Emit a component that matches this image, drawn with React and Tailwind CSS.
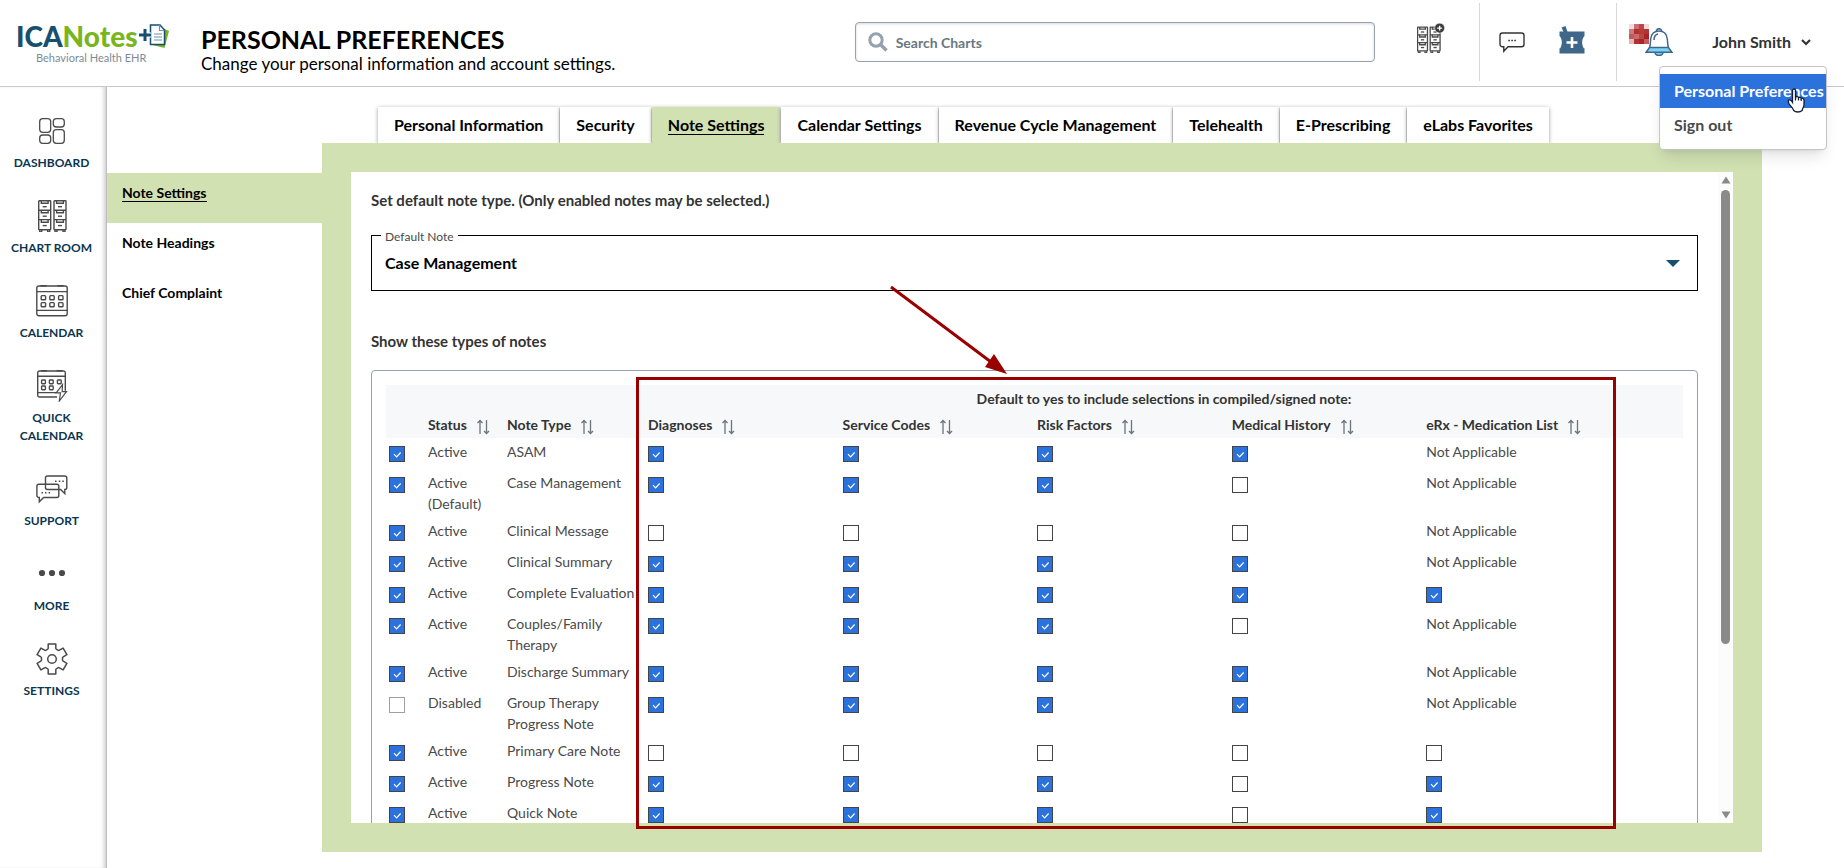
import { useState } from "react";

const NAV_ITEMS = [
  { label: "DASHBOARD", Icon: DashboardIcon },
  { label: "CHART ROOM", Icon: CabinetIcon },
  { label: "CALENDAR", Icon: CalendarIcon },
  { label: "QUICK CALENDAR", Icon: QuickCalendarIcon },
  { label: "SUPPORT", Icon: SupportIcon },
  { label: "MORE", Icon: MoreIcon },
  { label: "SETTINGS", Icon: GearIcon },
];

const TABS = [
  "Personal Information",
  "Security",
  "Note Settings",
  "Calendar Settings",
  "Revenue Cycle Management",
  "Telehealth",
  "E-Prescribing",
  "eLabs Favorites",
];

const SUB_MENU = ["Note Settings", "Note Headings", "Chief Complaint"];

const COLUMNS = [
  "Diagnoses",
  "Service Codes",
  "Risk Factors",
  "Medical History",
  "eRx - Medication List",
];

// flags follow COLUMNS, null means the column does not apply
const NOTES = [
  { status: "Active", type: "ASAM", flags: [true, true, true, true, null] },
  { status: "Active (Default)", type: "Case Management", flags: [true, true, true, false, null] },
  { status: "Active", type: "Clinical Message", flags: [false, false, false, false, null] },
  { status: "Active", type: "Clinical Summary", flags: [true, true, true, true, null] },
  { status: "Active", type: "Complete Evaluation", flags: [true, true, true, true, true] },
  { status: "Active", type: "Couples/Family Therapy", flags: [true, true, true, false, null] },
  { status: "Active", type: "Discharge Summary", flags: [true, true, true, true, null] },
  { status: "Disabled", type: "Group Therapy Progress Note", flags: [true, true, true, true, null] },
  { status: "Active", type: "Primary Care Note", flags: [false, false, false, false, false] },
  { status: "Active", type: "Progress Note", flags: [true, true, true, false, true] },
  { status: "Active", type: "Quick Note", flags: [true, true, true, false, true] },
];

function DashboardIcon() {
  return (
    <svg width="32" height="32" viewBox="0 0 32 32" fill="none" stroke="#4a4a4a" strokeWidth="1.3">
      <rect x="3.7" y="3.7" width="11" height="13.6" rx="3" />
      <rect x="17.3" y="3.7" width="11" height="8.3" rx="3" />
      <rect x="3.7" y="20" width="11" height="8.3" rx="3" />
      <rect x="17.3" y="14.7" width="11" height="13.6" rx="3" />
    </svg>
  );
}

function CabinetShape() {
  return (
    <>
      {[2.7, 18].map((x) => (
        <g key={x}>
          <rect x={x} y="0.7" width="12" height="29" rx="0.6" />
          <path d={`M${x} 10.2h12M${x} 19.6h12`} />
          {[0.7, 10.2, 19.6].map((y) => (
            <g key={y}>
              <path d={`M${x + 2.6} ${y}v2.6h6.8v-2.6`} />
              <path d={`M${x + 4} ${y + 6}h4`} />
            </g>
          ))}
          <path d={`M${x + 1} 30v2h2v-2M${x + 9} 30v2h2v-2`} />
        </g>
      ))}
    </>
  );
}

function CabinetIcon() {
  return (
    <svg width="32" height="32" viewBox="0 0 32 32" fill="none" stroke="#4a4a4a" strokeWidth="1.4">
      <CabinetShape />
    </svg>
  );
}

function CalendarIcon() {
  return (
    <svg width="32" height="32" viewBox="0 0 32 32" fill="none" stroke="#4a4a4a" strokeWidth="1.4">
      <rect x="0.8" y="1" width="30.4" height="29.8" rx="2" />
      <path d="M1 6.6h30M1 25.4h30" />
      <path d="M4.5 0.8h6M21.5 0.8h6" strokeWidth="1.6" />
      {[10.6, 17.6].map((y) =>
        [5.2, 13.8, 22.6].map((x) => (
          <rect key={`${x}-${y}`} x={x} y={y} width="4.4" height="4.2" rx="0.8" />
        ))
      )}
    </svg>
  );
}

function QuickCalendarIcon() {
  return (
    <svg width="32" height="32" viewBox="0 0 32 32" fill="none" stroke="#4a4a4a" strokeWidth="1.4">
      <path d="M21 27H3.5a1.8 1.8 0 0 1-1.8-1.8V2.8A1.8 1.8 0 0 1 3.5 1h24a1.8 1.8 0 0 1 1.8 1.8v18" />
      <path d="M2 6.2h27M2 22.6h18" />
      <path d="M5 0.8h6M20.5 0.8h6" strokeWidth="1.6" />
      <rect x="5.6" y="10" width="3.8" height="3.8" rx="0.7" />
      <rect x="13.4" y="10" width="3.8" height="3.8" rx="0.7" />
      <rect x="21.4" y="10" width="3.8" height="3.8" rx="0.7" />
      <rect x="5.6" y="16" width="3.8" height="3.8" rx="0.7" />
      <rect x="13.4" y="16" width="3.8" height="3.8" rx="0.7" />
      <path d="M26.5 14.6l-6.3 8.2h4.3l-1.2 8.2 7.2-9.4h-4.3z" fill="white" strokeWidth="1.2" />
    </svg>
  );
}

function SupportIcon() {
  return (
    <svg width="32" height="32" viewBox="0 0 32 32" fill="none" stroke="#4a4a4a" strokeWidth="1.4">
      <path d="M9.5 11V5A2 2 0 0 1 11.5 3h17.3a2 2 0 0 1 2 2v9.5a2 2 0 0 1-2 2v4l-4.2-4H11.5a2 2 0 0 1-2-2z" />
      <path d="M2.8 11.3h18a2 2 0 0 1 2 2v9.2a2 2 0 0 1-2 2H7.6l-4.3 4.3v-4.3a2 2 0 0 1-2.4-2v-9.2a2 2 0 0 1 1.9-2z" />
      <path d="M19 8.3h1.5M22.8 8.3h1.5M26.3 8.3h1.5M5.5 19.8h1.5M9 19.8h1.5M12.6 19.8h1.5" />
    </svg>
  );
}

function MoreIcon() {
  return (
    <svg width="32" height="32" viewBox="0 0 32 32" fill="#4a4a4a">
      <circle cx="6" cy="15" r="3.1" />
      <circle cx="16" cy="15" r="3.1" />
      <circle cx="26" cy="15" r="3.1" />
    </svg>
  );
}

function GearIcon() {
  return (
    <svg width="32" height="32" viewBox="0 0 32 32" fill="none" stroke="#4a4a4a" strokeWidth="1.5" strokeLinejoin="round">
      <path d="M12.2 1h7.6v4.2q0 .8.8 1.2l1.4.8q.7.4 1.4 0l3.7-2.1 3.8 6.5-3.7 2.2q-.7.4-.7 1.2v2q0 .8.7 1.2l3.7 2.2-3.8 6.5-3.7-2.1q-.7-.4-1.4 0l-1.4.8q-.8.4-.8 1.2V31h-7.6v-4.2q0-.8-.8-1.2l-1.4-.8q-.7-.4-1.4 0l-3.7 2.1-3.8-6.5 3.7-2.2q.7-.4.7-1.2v-2q0-.8-.7-1.2l-3.7-2.2 3.8-6.5 3.7 2.1q.7.4 1.4 0l1.4-.8q.8-.4.8-1.2z" />
      <circle cx="16" cy="16" r="4.3" />
    </svg>
  );
}

function AddChartIcon() {
  return (
    <svg width="28" height="30" viewBox="0 0 34 36" fill="none" stroke="#4a4a4a" strokeWidth="1.6">
      <g transform="translate(-2 4)">
        <CabinetShape />
      </g>
      <circle cx="27.5" cy="6" r="6" fill="#3b3b3b" stroke="white" strokeWidth="0.6" />
      <path d="M27.5 3v6M24.5 6h6" stroke="white" />
    </svg>
  );
}

function ChatIcon() {
  return (
    <svg width="26" height="22" viewBox="0 0 26 22" fill="none" stroke="#333333" strokeWidth="1.4">
      <path d="M3.5 2h19a2.5 2.5 0 0 1 2.5 2.5v8.8a2.5 2.5 0 0 1-2.5 2.5H9l-4.2 4.4v-4.4H3.5A2.5 2.5 0 0 1 1 13.3V4.5A2.5 2.5 0 0 1 3.5 2z" />
      <path d="M9.3 9.5h1.6M12.3 9.5h1.6M15.3 9.5h1.6" />
    </svg>
  );
}

function MortarIcon() {
  return (
    <svg width="26" height="28" viewBox="0 0 26 28" fill="#3e678a">
      <path d="M2.5 1.5L6.5 0l2 6h-4z" />
      <path d="M0.5 5.5h25V10c-3 3.500-3 8-.8 12.200h.8v5.300H.5v-5.300h.8C3.500 18 3.500 13.500.5 10z" />
      <path d="M13 11v11M7.5 16.500h11" stroke="white" strokeWidth="2.6" />
    </svg>
  );
}

function BellIcon() {
  return (
    <svg width="28" height="28" viewBox="0 0 28 28" fill="none" stroke="#3e678a" strokeWidth="1.5">
      <path d="M10 24.5a4 3 0 0 0 8 0" fill="#7cc8ee" />
      <path d="M11.5 3a2.5 2.3 0 0 1 5 0" />
      <path d="M4.5 19.5c1-2 .8-5.5 1.2-8.5C6.3 6 9.5 3 14 3s7.7 3 8.3 8c.4 3 .2 6.5 1.2 8.5" fill="white" />
      <path d="M4.5 19.5h19l3.3 4.7H1.2z" fill="#7bd4f8" />
      <path d="M9 12c0-3 1.5-5.5 4-6" />
    </svg>
  );
}

// pixelated cover over the unread count
function UnreadMark() {
  const cells = [
    "#f2dcdc", "#c96f6f", "#c04444", "#f0d9d9",
    "#c77b7b", "#b52f2f", "#b93a3a", "#b33434",
    "#c05a5a", "#c86a6a", "#b84848", "#a92424",
    "#e3b8b8", "#b13030", "#ab2626", "#c25c5c",
  ];
  return (
    <svg width="20" height="20" viewBox="0 0 4 4" shapeRendering="crispEdges">
      {cells.map((fill, i) => (
        <rect key={i} x={i % 4} y={Math.floor(i / 4)} width="1" height="1" fill={fill} />
      ))}
    </svg>
  );
}

function SortIcon() {
  return (
    <svg width="14" height="16" viewBox="0 0 14 16" fill="none" stroke="#6b747c" strokeWidth="1.3" className="mt-1">
      <path d="M4 15V1.5M1.5 4L4 1.5 6.5 4M10.5 1v13.5M8 12l2.5 2.5L13 12" />
    </svg>
  );
}

function Logo() {
  return (
    <a href="#" className="flex w-[154px] flex-col pt-[2px]">
      <span className="flex items-center text-[28px] leading-[30px] font-black text-[#17506f]">
        ICA<span className="text-[#7ab51d]">Notes</span>
        <svg width="32" height="28" viewBox="0 0 32 28" className="shrink-0">
          <path d="M22 5l9 4-4.5 17-12-3z" fill="#7ab51d" />
          <path d="M12.5 3h9.500l4.500 5v14.500H12.500z" fill="white" stroke="#17506f" strokeWidth="1.5" />
          <path d="M21.5 3v5.500h5M16 12h8M16 15h8M16 18h8" stroke="#6f93a8" strokeWidth="1.2" fill="none" />
          <path d="M1 13h12M6.5 7.500v11" stroke="white" strokeWidth="5" />
          <path d="M1 13h12M7 7v12" stroke="#17506f" strokeWidth="3" />
        </svg>
      </span>
      <span className="pl-5 text-[11px] leading-[14px] text-[#7d8b98]">Behavioral Health EHR</span>
    </a>
  );
}

function UserMenu() {
  return (
    <div className="relative">
      <button className="flex items-center gap-[10px] font-bold text-[#333333]">
        John Smith
        <svg width="10" height="7" viewBox="0 0 10 7" fill="none" stroke="#333333" strokeWidth="2.2">
          <path d="M1 1l4 4 4-4" />
        </svg>
      </button>
      <div className="absolute top-9 -right-4 z-10 w-[168px] rounded border border-[#c4c4c4] bg-white py-[7px] shadow-lg">
        <a href="#" className="block bg-[#2b72dc] pl-[14px] leading-[34px] font-bold whitespace-nowrap text-white">
          Personal Preferences
        </a>
        <a href="#" className="block pl-[14px] leading-[34px] font-bold text-[#4a4a4a]">
          Sign out
        </a>
        <svg width="20" height="26" viewBox="0 0 20 26" className="absolute top-[21px] left-[127px]">
          <path
            d="M5.5 2.500c0-2 3-2 3 0v7.500l.3-1c1-1 2.500-.5 2.700.8.8-1 2.500-.5 2.700.8.9-.9 2.800-.2 2.800 1.400v5c0 2-1.800 3.500-1.800 5.500-2.500 2-6.500 2-8.500 0-.8-2.500-3-4-4.800-7-.7-1.500-1-2.700-.2-3.400 1-.7 2.800.4 3.800 2.200z"
            fill="white"
            stroke="#111c33"
            strokeWidth="1.3"
          />
          <path d="M8.5 9.500v3M11.500 10v2.500M14.200 11v2" stroke="#111c33" strokeWidth="1.2" />
        </svg>
      </div>
    </div>
  );
}

function Header() {
  return (
    <header className="flex h-[87px] items-center border-b border-[#c9c9c9] pr-[33px] pb-[2px] pl-4">
      <Logo />
      <div className="ml-[31px] flex-1 pt-4 text-black">
        <h1 className="text-[25px] leading-7 font-bold">PERSONAL PREFERENCES</h1>
        <p className="text-[17px] leading-[22px]">
          Change your personal information and account settings.
        </p>
      </div>
      <label className="flex h-10 w-[29%] items-center gap-2 rounded border border-[#95a1ac] px-3 shadow-[inset_0_1px_3px_rgba(0,0,0,0.15)]">
        <svg width="20" height="20" viewBox="0 0 20 20" fill="none" stroke="#95a1ac">
          <circle cx="8" cy="8" r="6.2" strokeWidth="3" />
          <path d="M12.5 12.500l6 6" strokeWidth="3.6" />
        </svg>
        <input
          type="text"
          placeholder="Search Charts"
          aria-label="Search Charts"
          className="flex-1 text-[14px] font-bold outline-none placeholder:text-[#6b7780]"
        />
      </label>
      <button aria-label="Add chart" className="mr-[34px] ml-[42px] pb-2">
        <AddChartIcon />
      </button>
      <div className="flex h-[78px] items-center gap-[34px] border-x border-[#d8d8d8] pr-[31px] pl-[19px]">
        <button aria-label="Messages">
          <ChatIcon />
        </button>
        <button aria-label="Pharmacy" className="pb-1">
          <MortarIcon />
        </button>
      </div>
      <button aria-label="Notifications" className="mr-[39px] ml-3 flex items-start pb-1">
        <UnreadMark />
        <span className="-ml-1 pt-1">
          <BellIcon />
        </span>
      </button>
      <UserMenu />
    </header>
  );
}

function Sidebar() {
  return (
    <nav className="flex w-[107px] shrink-0 flex-col gap-7 border-r border-[#bdbdbd] px-2 pt-7 shadow-[inset_-4px_0_4px_-2px_rgba(0,0,0,0.2)]">
      {NAV_ITEMS.map(({ label, Icon }) => (
        <a
          key={label}
          href="#"
          className="flex flex-col items-center gap-[7px] pr-[3px] text-center text-[12px] leading-[18px] font-bold text-[#0b3650]"
        >
          <Icon />
          {label}
        </a>
      ))}
    </nav>
  );
}

function Checkbox({ checked, onChange, label, faded }) {
  return (
    <span className="grid size-4">
      <input
        type="checkbox"
        checked={checked}
        onChange={onChange}
        aria-label={label}
        className={`col-start-1 row-start-1 size-4 appearance-none border checked:bg-[#2b72dc] ${
          faded ? "border-[#a0a0a0]" : "border-[#444444]"
        }`}
      />
      {checked && (
        <svg
          viewBox="0 0 16 16"
          className="pointer-events-none col-start-1 row-start-1 size-4"
          fill="none"
          stroke="white"
          strokeWidth="1.2"
        >
          <path d="M5 8.200l2.600 2.600 4-4.300" />
        </svg>
      )}
    </span>
  );
}

function NotesTable() {
  const [notes, setNotes] = useState(NOTES);

  const toggleFlag = (row, col) => {
    setNotes(
      notes.map((note, i) =>
        i === row
          ? { ...note, flags: note.flags.map((f, j) => (j === col ? !f : f)) }
          : note
      )
    );
  };

  const toggleStatus = (row) => {
    setNotes(
      notes.map((note, i) =>
        i === row
          ? { ...note, status: note.status === "Disabled" ? "Active" : "Disabled" }
          : note
      )
    );
  };

  return (
    <table className="w-full table-fixed text-left text-[14px] leading-[21px] text-[#4a4a4a]">
      <colgroup>
        <col className="w-[39px]" />
        <col className="w-[79px]" />
        <col className="w-[141px]" />
        {COLUMNS.map((name) => (
          <col key={name} className="w-[15%]" />
        ))}
        <col />
      </colgroup>
      <thead className="bg-[#f7f8fa] text-[#333333]">
        <tr className="h-[26px]">
          <td colSpan={3} />
          <th colSpan={6} className="text-center font-bold">
            Default to yes to include selections in compiled/signed note:
          </th>
        </tr>
        <tr className="h-[27px]">
          <td />
          {["Status", "Note Type", ...COLUMNS].map((name) => (
            <th key={name} className="px-[3px]">
              <button className="flex items-center gap-[9px] font-bold whitespace-nowrap">
                {name}
                <SortIcon />
              </button>
            </th>
          ))}
          <td />
        </tr>
      </thead>
      <tbody>
        {notes.map((note, row) => (
          <tr key={note.type} className="h-[31px] align-top">
            <td className="px-[3px] pt-2">
              <Checkbox
                checked={note.status !== "Disabled"}
                onChange={() => toggleStatus(row)}
                label={`Enable ${note.type}`}
                faded={note.status === "Disabled"}
              />
            </td>
            <td className="p-[3px]">{note.status}</td>
            <td className="py-[3px] pl-[3px]">{note.type}</td>
            {note.flags.map((flag, col) =>
              flag === null ? (
                <td key={col} className="p-[3px]">
                  Not Applicable
                </td>
              ) : (
                <td key={col} className="px-[3px] pt-2">
                  <Checkbox
                    checked={flag}
                    onChange={() => toggleFlag(row, col)}
                    label={`${COLUMNS[col]} for ${note.type}`}
                  />
                </td>
              )
            )}
            <td />
          </tr>
        ))}
      </tbody>
    </table>
  );
}

function ScrollBar() {
  return (
    <div className="flex w-[15px] shrink-0 flex-col items-center bg-[#fcfcfc] py-1">
      <svg width="10" height="8" viewBox="0 0 10 8" fill="#8a8a8a">
        <path d="M5 0.5L9.5 7.5H0.5z" />
      </svg>
      <div className="mt-[6px] h-[454px] w-[9px] rounded-full bg-[#8a8a8a]" />
      <svg width="10" height="8" viewBox="0 0 10 8" fill="#8a8a8a" className="mt-auto">
        <path d="M5 7.5L0.5 0.5h9z" />
      </svg>
    </div>
  );
}

function NoteSettings() {
  return (
    <div className="relative flex h-[calc(100vh-217px)] bg-white">
      <div className="flex-1 overflow-y-auto px-5 [scrollbar-width:none]">
        <h2 className="pt-[18px] text-[15px] leading-5 font-bold text-[#333333]">
          Set default note type. (Only enabled notes may be selected.)
        </h2>
        <div className="relative mt-[25px]">
          <label
            htmlFor="default-note"
            className="absolute -top-2 left-[10px] bg-white px-1 text-[12px] leading-5 text-[#4a4a4a]"
          >
            Default Note
          </label>
          <select
            id="default-note"
            defaultValue="Case Management"
            className="h-14 w-full appearance-none border border-black px-[13px] text-[16px] font-bold text-black"
          >
            {NOTES.map((note) => (
              <option key={note.type}>{note.type}</option>
            ))}
          </select>
          <svg width="14" height="7" viewBox="0 0 14 7" className="pointer-events-none absolute top-[25px] right-[18px]">
            <path d="M0 0h14L7 7z" fill="#17506f" />
          </svg>
        </div>
        <h2 className="mt-10 text-[15px] leading-5 font-bold text-[#333333]">
          Show these types of notes
        </h2>
        <div className="mt-[19px] rounded-sm border border-[#95a1ac] p-[14px]">
          <NotesTable />
        </div>
      </div>
      <ScrollBar />

      {/* Callout around the default selections */}
      <div className="pointer-events-none absolute top-[205px] right-[117px] -bottom-[6px] left-[285px] border-[3px] border-[#990000]" />
      <svg
        width="130"
        height="100"
        viewBox="0 0 130 100"
        className="pointer-events-none absolute top-[110px] left-[535px]"
      >
        <path d="M5 5l100 75" stroke="#990000" strokeWidth="3" />
        <path d="M121 92l-22-7 9-13z" fill="#990000" />
      </svg>
    </div>
  );
}

export default function App() {
  const [tab, setTab] = useState("Note Settings");

  return (
    <div className="flex min-h-screen flex-col bg-white font-['Lato',sans-serif] text-[16px]">
      <Header />
      <div className="flex flex-1">
        <Sidebar />

        {/* Sub menu */}
        <nav className="mt-[86px] w-[215px] shrink-0 text-[14px] font-bold text-black">
          {SUB_MENU.map((item) => (
            <a
              key={item}
              href="#"
              className={`block h-[50px] px-[15px] pt-[9px] leading-[22px] ${
                item === "Note Settings" ? "bg-[#d1e1b2]" : ""
              }`}
            >
              <span className={item === "Note Settings" ? "border-b border-black" : ""}>
                {item}
              </span>
            </a>
          ))}
        </nav>

        <main className="mr-[82px] min-w-0 flex-1 pt-5">
          <div className="flex pl-14">
            {TABS.map((name) => (
              <button
                key={name}
                onClick={() => setTab(name)}
                className={`mr-px h-9 px-4 leading-5 font-bold whitespace-nowrap text-black shadow-[0_1px_4px_rgba(0,0,0,0.4)] ${
                  name === tab ? "bg-[#d1e1b2]" : "bg-white"
                }`}
              >
                <span className={name === tab ? "border-b border-black" : ""}>{name}</span>
              </button>
            ))}
          </div>
          <section className="relative bg-[#d1e1b2] p-[29px]">
            <NoteSettings />
          </section>
        </main>
      </div>
    </div>
  );
}
